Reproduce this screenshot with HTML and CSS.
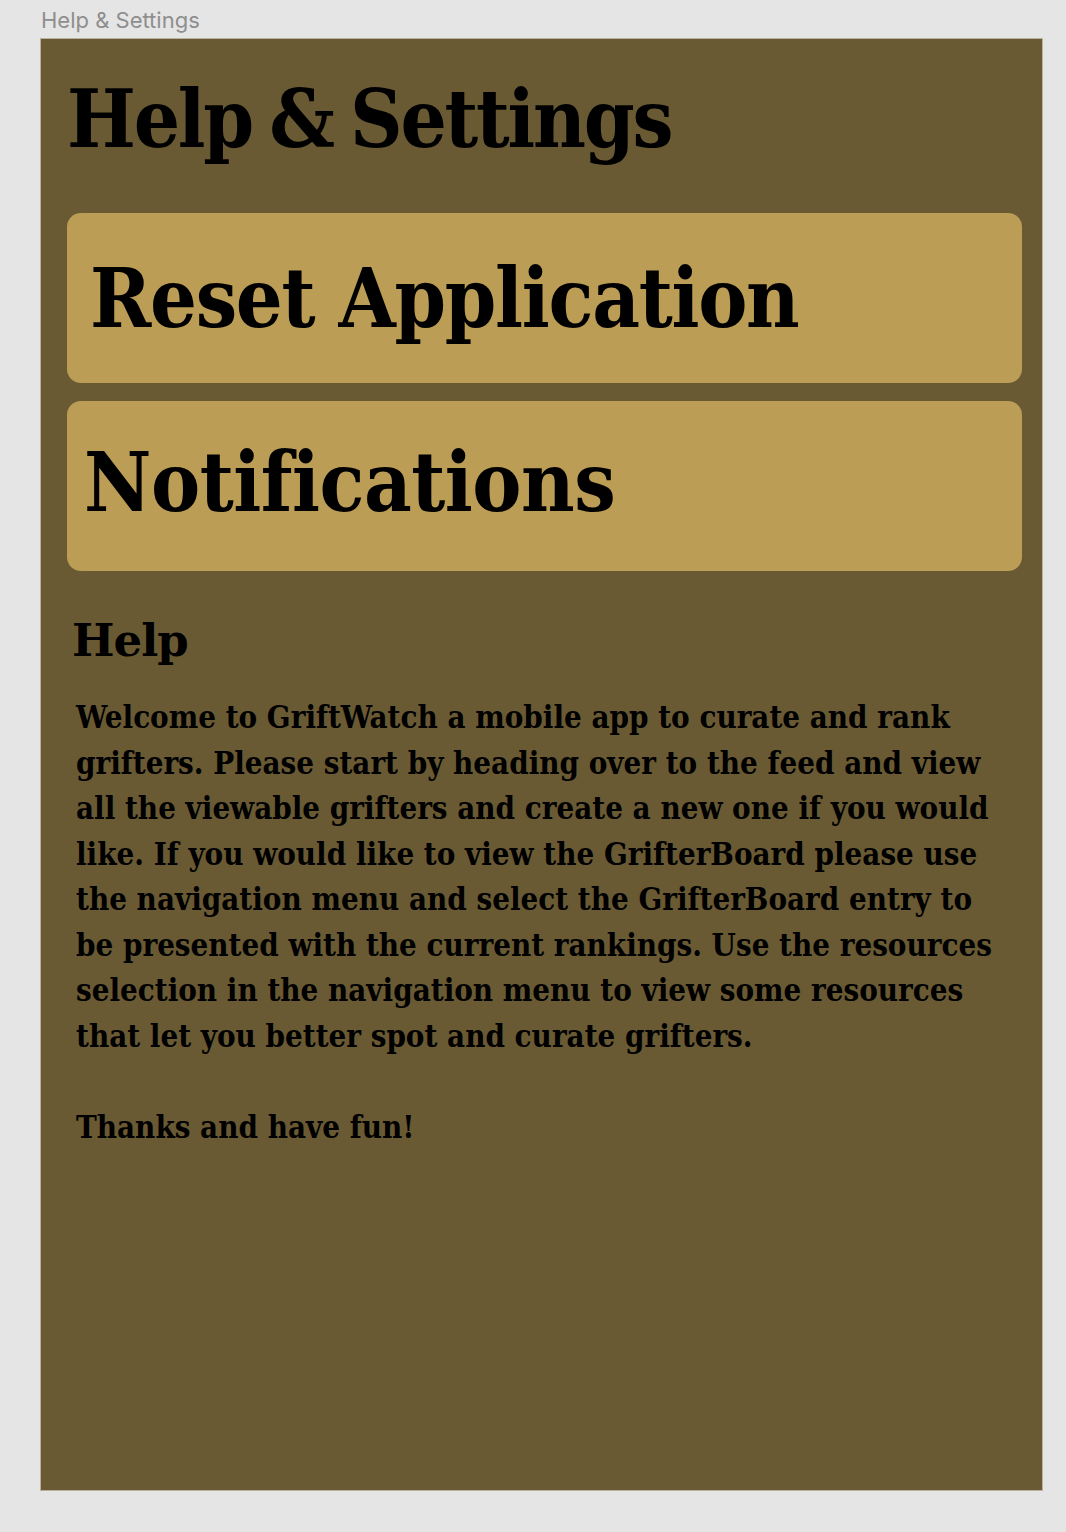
FILE: index.html
```html
<!DOCTYPE html>
<html>
<head>
<meta charset="utf-8">
<link rel="stylesheet" href="styles.css">
</head>
<body>
<div class="label">Help &amp; Settings</div>
<main class="frame">
  <h1 class="title">Help &amp; Settings</h1>
  <div class="card card-reset"><span>Reset Application</span></div>
  <div class="card card-notif"><span>Notifications</span></div>
  <section class="help">
    <h2 class="help-title">Help</h2>
    <p class="help-text">Welcome to GriftWatch a mobile app to curate and rank grifters. Please start by heading over to the feed and view all the viewable grifters and create a new one if you would like. If you would like to view the GrifterBoard please use the navigation menu and select the GrifterBoard entry to be presented with the current rankings. Use the resources selection in the navigation menu to view some resources that let you better spot and curate grifters.<br><br>Thanks and have fun!</p>
  </section>
</main>
</body>
</html>
```
FILE: styles.css
```css
html, body {
  margin: 0;
  padding: 0;
  background: #e5e5e5;
}
.label {
  font-family: Inter, "Noto Sans", sans-serif;
  font-size: 22px;
  line-height: 26px;
  color: #8e8e8e;
  padding: 7px 0 0 41px;
  height: 31px;
}
.frame {
  box-sizing: border-box;
  margin-left: 40px;
  width: 1003px;
  height: 1453px;
  background: #695a34;
  border: 1px solid #b9b19d;
  padding: 0 20px 0 26px;
  display: flex;
  flex-direction: column;
}
.title {
  margin: 30px 0 0 0;
  font-family: "DejaVu Serif Condensed", "DejaVu Serif", serif;
  font-weight: 700;
  font-size: 81px;
  line-height: 100px;
  letter-spacing: -2.2px;
  word-spacing: -6px;
  color: #000;
  height: 144px;
}
.card {
  box-sizing: border-box;
  height: 170px;
  border-radius: 14px;
  background: #bb9d55;
  display: flex;
  align-items: center;
  font-family: "DejaVu Serif Condensed", "DejaVu Serif", serif;
  font-weight: 700;
  font-size: 82px;
  color: #000;
}
.card-reset { padding-left: 23px; letter-spacing: -1.3px; }
.card-notif { padding-left: 17px; padding-bottom: 8px; margin-top: 18px; letter-spacing: -0.5px; }
.help {
  padding-left: 5px;
  margin-top: 40px;
}
.help-title {
  margin: 0;
  font-family: "DejaVu Serif", serif;
  font-weight: 700;
  font-size: 45px;
  line-height: 60px;
  letter-spacing: -1px;
  color: #000;
}
.help-text {
  margin: 24px 0 0 4px;
  width: 930px;
  font-family: "DejaVu Serif Condensed", "DejaVu Serif", serif;
  font-weight: 700;
  font-size: 31px;
  line-height: 45.5px;
  letter-spacing: 0;
  color: #000;
}
```
